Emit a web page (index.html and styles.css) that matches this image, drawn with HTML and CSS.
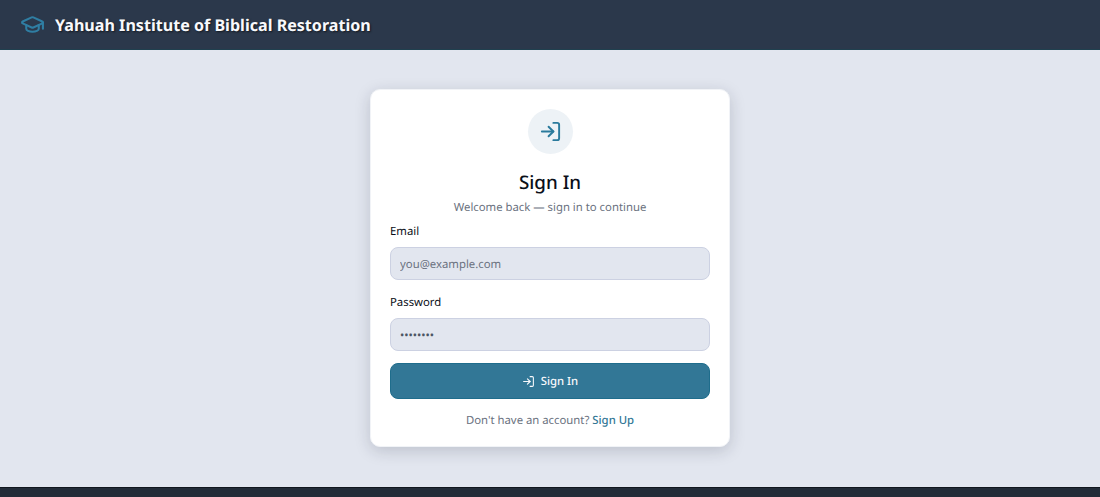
FILE: index.html
```html
<!DOCTYPE html>
<html lang="en">

<head>
    <meta charset="UTF-8">
    <meta name="viewport" content="width=device-width, initial-scale=1.0">
    <title>Sign In</title>
    <link rel="stylesheet" href="styles.css">
</head>

<body>
    <header class="topbar">
        <svg class="brandIcon" viewBox="0 0 24 24" fill="none" stroke="currentColor" stroke-width="2" stroke-linecap="round" stroke-linejoin="round">
            <path d="M21.42 10.92a1 1 0 0 0-.02-1.84L12.83 5.18a2 2 0 0 0-1.66 0L2.6 9.08a1 1 0 0 0 0 1.83l8.57 3.91a2 2 0 0 0 1.66 0z"></path>
            <path d="M22 10v6"></path>
            <path d="M6 12.5V16a6 3 0 0 0 12 0v-3.5"></path>
        </svg>
        <span class="brandName">Yahuah Institute of Biblical Restoration</span>
    </header>

    <main class="page">
        <form class="card">
            <div class="iconCircle">
                <svg viewBox="0 0 24 24" fill="none" stroke="currentColor" stroke-width="2" stroke-linecap="round" stroke-linejoin="round">
                    <path d="M15 3h4a2 2 0 0 1 2 2v14a2 2 0 0 1-2 2h-4"></path>
                    <path d="M10 17l5-5-5-5"></path>
                    <path d="M15 12H3"></path>
                </svg>
            </div>
            <h1 class="title">Sign In</h1>
            <p class="subtitle">Welcome back — sign in to continue</p>

            <label class="fieldLabel" for="email">Email</label>
            <input class="field" id="email" type="email" placeholder="you@example.com">

            <label class="fieldLabel second" for="password">Password</label>
            <input class="field" id="password" type="password" value="password">

            <button class="submit" type="button">
                <svg viewBox="0 0 24 24" fill="none" stroke="currentColor" stroke-width="2" stroke-linecap="round" stroke-linejoin="round">
                    <path d="M15 3h4a2 2 0 0 1 2 2v14a2 2 0 0 1-2 2h-4"></path>
                    <path d="M10 17l5-5-5-5"></path>
                    <path d="M15 12H3"></path>
                </svg>
                Sign In
            </button>

            <p class="switch">Don't have an account? <a href="#">Sign Up</a></p>
        </form>
    </main>

    <footer class="bottombar"></footer>
</body>

</html>
```

FILE: styles.css
```css
* {
    box-sizing: border-box;
}

body {
    display: flex;
    flex-direction: column;
    height: 497px;
    margin: 0;
    overflow: hidden;
    background-color: #e2e6ef;
    font-family: "Noto Sans", sans-serif;
    color: #0b0f19;
    text-rendering: geometricPrecision;
}

.topbar {
    display: flex;
    align-items: center;
    gap: 10px;
    height: 50px;
    padding: 0 20px;
    background-color: #2b384b;
    border-bottom: 1px solid #20404f;
}

.brandIcon {
    width: 25px;
    height: 25px;
    color: #2f7ea3;
}

.brandName {
    font-size: 16.1px;
    font-weight: 700;
    color: #f8f9fc;
    text-shadow: 1px 1px 2px rgba(0, 0, 0, 0.6);
}

.page {
    flex: 1;
    display: flex;
    justify-content: center;
    align-items: flex-start;
    padding-top: 39px;
}

.card {
    display: flex;
    flex-direction: column;
    width: 360px;
    padding: 19px 19px 17px;
    background-color: #fff;
    border: 1px solid #f1f3f7;
    border-radius: 10px;
    box-shadow: 0 4px 16px rgba(20, 30, 50, 0.18);
}

.iconCircle {
    display: flex;
    justify-content: center;
    align-items: center;
    align-self: center;
    width: 45px;
    height: 45px;
    border-radius: 50%;
    background-color: #edf2f6;
    color: #2a7a9c;
}

.iconCircle svg {
    width: 23px;
    height: 23px;
}

.title {
    margin: 15px 0 0;
    font-size: 18.8px;
    font-weight: 500;
    line-height: 26px;
    text-align: center;
    color: #0b0f19;
}

.subtitle {
    margin: 5px 0 0;
    font-size: 11.33px;
    line-height: 16px;
    text-align: center;
    color: #6b7280;
}

.fieldLabel {
    margin-top: 8px;
    font-size: 11.33px;
    line-height: 16px;
    color: #0b0f19;
}

.fieldLabel.second {
    margin-top: 15px;
}

.field {
    width: 100%;
    height: 33px;
    margin-top: 7px;
    padding: 1px 9px 0;
    background-color: #e2e6ef;
    border: 1px solid #ccd1e2;
    border-radius: 8px;
    font-family: inherit;
    font-size: 11.33px;
    color: #4b5563;
    text-rendering: geometricPrecision;
}

.field::placeholder {
    color: #6b7280;
    opacity: 1;
}

.submit {
    display: flex;
    justify-content: center;
    align-items: center;
    gap: 6px;
    height: 36px;
    margin-top: 12px;
    background-color: #327796;
    border: 1px solid #1f6d8c;
    border-radius: 8px;
    font-family: inherit;
    font-size: 11.33px;
    font-weight: 500;
    color: #f8f9fc;
    text-rendering: geometricPrecision;
    cursor: pointer;
}

.submit svg {
    width: 13px;
    height: 13px;
}

.switch {
    margin: 14px 0 0;
    font-size: 11.33px;
    line-height: 16px;
    text-align: center;
    color: #6b7280;
}

.switch a {
    color: #327796;
    font-weight: 500;
    text-decoration: none;
}

.bottombar {
    height: 10px;
    background-color: #222c38;
    border-top: 1px solid #10161e;
}
```
